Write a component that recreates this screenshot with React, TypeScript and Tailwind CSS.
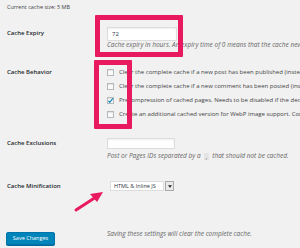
import React from "react";

function Checkbox({ checked = false }: { checked?: boolean }) {
  return (
    <span className="relative inline-block w-[7px] h-[7px] shrink-0 border border-[#b4b9be] bg-[#fbfbfb] shadow-[inset_0_1px_1px_rgba(0,0,0,0.1)]">
      {checked && (
        <svg viewBox="0 0 10 10" className="absolute left-[-1px] top-[-1px] w-[7px] h-[7px]">
          <path d="M2 5.5 L4 7.5 L8.5 2" fill="none" stroke="#1e8cbe" strokeWidth="1.8" />
        </svg>
      )}
    </span>
  );
}

export default function App() {
  const label = "w-[107px] shrink-0 pl-[7px] text-[6px] font-semibold text-[#23282d] leading-[10px]";
  const desc = "text-[6.5px] italic text-[#666] leading-[8px] whitespace-nowrap";
  const cbRow = "flex items-center h-[14px] gap-[5px] text-[6px] text-[#444] whitespace-nowrap";
  return (
    <div className="relative w-[300px] h-[248px] overflow-hidden bg-[#f1f1f1] font-['Open_Sans',sans-serif]">
      <p className="pt-[4px] pl-[7px] text-[5.5px] leading-[7px] text-[#444]">Current cache size: 5 MB</p>

      {/* Cache Expiry */}
      <div className="flex mt-[16px]">
        <div className={label + " pt-[1px]"}>Cache Expiry</div>
        <div className="flex flex-col">
          <div className="w-[70px] h-[14px] bg-white border border-[#ddd] shadow-[inset_0_1px_2px_rgba(0,0,0,0.07)] pl-[4px] text-[6px] leading-[12px] text-[#32373c]">72</div>
          <p className={desc}>Cache expiry in hours. An expiry time of 0 means that the cache never expires.</p>
        </div>
      </div>

      {/* Cache Behavior */}
      <div className="flex mt-[16px]">
        <div className={label + " pt-[2px]"}>Cache Behavior</div>
        <div className="flex flex-col">
          <div className={cbRow}><Checkbox />Clear the complete cache if a new post has been published (instead of only the home page cache).</div>
          <div className={cbRow}><Checkbox />Clear the complete cache if a new comment has been posted (instead of only the page specific cache).</div>
          <div className={cbRow}><Checkbox checked />Precompression of cached pages. Needs to be disabled if the decoding fails in the web browser.</div>
          <div className={cbRow}><Checkbox />Create an additional cached version for WebP image support. Convert your images to WebP.</div>
        </div>
      </div>

      {/* Cache Exclusions */}
      <div className="flex mt-[17px]">
        <div className={label}>Cache Exclusions</div>
        <div className="flex flex-col">
          <div className="w-[68px] h-[11px] bg-white border border-[#ddd] shadow-[inset_0_1px_2px_rgba(0,0,0,0.07)]"></div>
          <p className={desc + " mt-[3px] flex items-center"}>
            Post or Pages IDs separated by a
            <span className="mx-[3px] inline-block px-[2px] bg-[#e4e4e4] not-italic leading-[7px]">,</span>
            that should not be cached.
          </p>
        </div>
      </div>

      {/* Cache Minification */}
      <div className="flex mt-[21px] items-center">
        <div className={label}>Cache Minification</div>
        <div className="flex items-center h-[10px] ml-[3px]">
          <div className="h-[10px] w-[54px] bg-white border border-[#ddd] pl-[3px] text-[5.5px] leading-[8px] text-[#32373c] whitespace-nowrap">HTML &amp; Inline JS</div>
          <div className="ml-[1px] h-[10px] w-[9px] bg-[#e9e9e9] border border-[#aaa] flex items-center justify-center">
            <svg viewBox="0 0 6 4" className="w-[4px] h-[3px]"><path d="M0 0 H6 L3 4 Z" fill="#222" /></svg>
          </div>
        </div>
      </div>

      {/* Save */}
      <div className="flex mt-[31px] items-center">
        <div className="w-[107px] shrink-0 pl-[6px]">
          <button className="w-[49px] h-[13px] rounded-[2px] bg-[#0085ba] border border-[#0073aa] text-white text-[5.5px] leading-[11px] shadow-[0_1px_0_#006799]">Save Changes</button>
        </div>
        <p className={desc}>Saving these settings will clear the complete cache.</p>
      </div>

      {/* Pink highlight boxes */}
      <div className="absolute left-[95px] top-[15px] w-[88px] h-[42px] border-[5px] border-[#e8195f] rounded-[1px]"></div>
      <div className="absolute left-[94px] top-[60px] w-[38px] h-[69px] border-[5px] border-[#e8195f] rounded-[1px]"></div>

      {/* Arrow */}
      <svg className="absolute left-0 top-0" width="300" height="248" viewBox="0 0 300 248">
        <line x1="76" y1="210" x2="96" y2="197" stroke="#e8195f" strokeWidth="3" strokeLinecap="round" />
        <polygon points="103,192 90,194 97,202" fill="#e8195f" />
      </svg>
    </div>
  );
}
